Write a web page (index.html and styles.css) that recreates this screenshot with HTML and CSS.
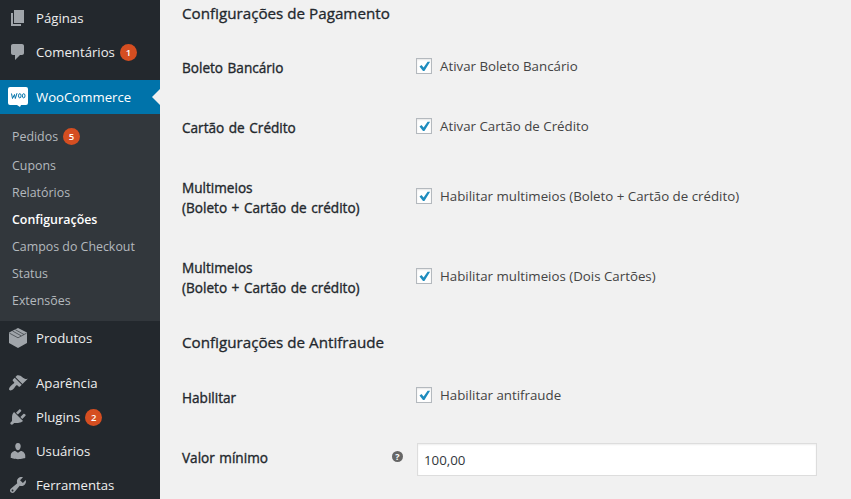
FILE: index.html
```
<!DOCTYPE html>
<html lang="pt-BR">
<head>
<meta charset="utf-8">
<title>WooCommerce</title>
<link rel="stylesheet" href="styles.css">
</head>
<body>
<div class="layout">
  <nav class="menu">
    <a class="item"><svg class="icon" viewBox="0 0 20 20"><path d="M6 15V2h10v13H6zm-1 1h8v2H3V5h2v11z"/></svg><span>Páginas</span></a>
    <a class="item"><svg class="icon" viewBox="0 0 20 20"><path d="M5 2h9c1.1 0 2 .9 2 2v7c0 1.1-.9 2-2 2h-2l-5 5v-5H5c-1.1 0-2-.9-2-2V4c0-1.1.9-2 2-2z"/></svg><span>Comentários</span><b class="badge">1</b></a>
    <a class="item current gap"><svg class="icon" viewBox="0 0 20 20"><path class="bubble" d="M2 0h16q2 0 2 2v14q0 2-2 2h-5l-1 2-3-2H2q-2 0-2-2V2q0-2 2-2z"/><path class="letters" d="M3.5 6.5l1 5 2-4 .8 4L9 6.2"/><ellipse class="letters" cx="11.8" cy="8.8" rx="1.3" ry="2.1"/><ellipse class="letters" cx="15.7" cy="8.8" rx="1.3" ry="2.1"/></svg><span>WooCommerce</span></a>
    <div class="submenu">
      <a class="sub first"><span>Pedidos</span><b class="badge">5</b></a>
      <a class="sub">Cupons</a>
      <a class="sub">Relatórios</a>
      <a class="sub active">Configurações</a>
      <a class="sub">Campos do Checkout</a>
      <a class="sub">Status</a>
      <a class="sub">Extensões</a>
    </div>
    <a class="item"><svg class="icon" viewBox="0 0 20 20"><path d="M10 0l9 4.5V15l-9 5-9-5V4.500z"/><path class="crease" d="M1.500 5.200l8.500 4.600 8.500-4.600M4.500 3l8.700 4.800M7.300 1.700l8.700 4.800"/></svg><span>Produtos</span></a>
    <a class="item gap"><svg class="icon" viewBox="0 0 20 20"><path d="M14.48 11.06L7.41 3.99l1.5-1.5c.5-.56 2.3-.47 3.51.32 1.21.8 1.43 1.28 2.91 2.1 1.18.64 2.45 1.26 4.45.85zm-.71.71L6.7 4.7 4.93 6.47c-.39.39-.39 1.02 0 1.41l1.06 1.06c.39.39.39 1.03 0 1.42-.6.6-1.43 1.11-2.21 1.69-.35.26-.7.53-1.01.84C1.43 14.23.4 16.08 1.4 17.07c.99 1 2.84-.03 4.18-1.36.31-.31.58-.66.85-1.02.57-.78 1.08-1.61 1.69-2.21.39-.39 1.02-.39 1.41 0l1.06 1.06c.39.39 1.02.39 1.41 0z"/></svg><span>Aparência</span></a>
    <a class="item"><svg class="icon" viewBox="0 0 20 20"><path d="M13.11 4.36L9.87 7.6 8 5.73l3.24-3.24c.35-.34 1.05-.2 1.56.32.52.51.66 1.21.31 1.55zm-8 1.77l.91-1.12 9.01 9.01-1.19.84c-.71.71-2.63 1.16-3.82 1.16H6.14L4.9 17.26c-.59.59-1.54.59-2.12 0-.59-.58-.59-1.53 0-2.12l1.24-1.24v-3.88c0-1.13.4-3.19 1.09-3.89zm7.26 3.97l3.24-3.24c.34-.35 1.04-.21 1.55.31.52.51.66 1.21.31 1.55l-3.24 3.25z"/></svg><span>Plugins</span><b class="badge">2</b></a>
    <a class="item"><svg class="icon" viewBox="0 0 20 20"><path d="M10 9.25c-2.27 0-2.73-3.44-2.73-3.44C7 4.02 7.82 2 9.97 2c2.16 0 2.98 2.02 2.71 3.81 0 0-.41 3.44-2.68 3.44zm0 2.57L12.72 10c2.39 0 4.52 2.33 4.52 4.53v2.49s-3.65 1.13-7.24 1.13c-3.65 0-7.24-1.13-7.24-1.13v-2.49c0-2.25 1.94-4.48 4.47-4.48z"/></svg><span>Usuários</span></a>
    <a class="item"><svg class="icon" viewBox="0 0 20 20"><path d="M16.68 9.77c-1.34 1.34-3.3 1.67-4.95.99l-5.41 6.52c-.99.99-2.59.99-3.58 0s-.99-2.59 0-3.57l6.52-5.42c-.68-1.65-.35-3.61.99-4.95 1.28-1.28 3.12-1.62 4.72-1.06l-2.89 2.89 2.82 2.82 2.86-2.87c.53 1.58.18 3.39-1.08 4.65zM3.81 16.21c.4.39 1.04.39 1.43 0 .4-.4.4-1.04 0-1.43-.39-.4-1.03-.4-1.43 0-.39.39-.39 1.03 0 1.43z"/></svg><span>Ferramentas</span></a>
  </nav>
  <main class="content">
    <h2>Configurações de Pagamento</h2>
    <div class="row"><div class="label">Boleto Bancário</div><label class="check"><span class="box"><svg viewBox="0 0 14 14"><path d="M2.500 7.600l2-1.500 2.100 2.400L10.600 2.700h2.500L7.400 12H6z"/></svg></span>Ativar Boleto Bancário</label></div>
    <div class="row"><div class="label">Cartão de Crédito</div><label class="check"><span class="box"><svg viewBox="0 0 14 14"><path d="M2.500 7.600l2-1.500 2.100 2.400L10.600 2.700h2.500L7.400 12H6z"/></svg></span>Ativar Cartão de Crédito</label></div>
    <div class="row"><div class="label">Multimeios<br>(Boleto + Cartão de crédito)</div><label class="check middle"><span class="box"><svg viewBox="0 0 14 14"><path d="M2.500 7.600l2-1.500 2.100 2.400L10.600 2.700h2.500L7.400 12H6z"/></svg></span>Habilitar multimeios (Boleto + Cartão de crédito)</label></div>
    <div class="row"><div class="label">Multimeios<br>(Boleto + Cartão de crédito)</div><label class="check middle"><span class="box"><svg viewBox="0 0 14 14"><path d="M2.500 7.600l2-1.500 2.100 2.400L10.600 2.700h2.500L7.400 12H6z"/></svg></span>Habilitar multimeios (Dois Cartões)</label></div>
    <h2 class="second">Configurações de Antifraude</h2>
    <div class="row"><div class="label">Habilitar</div><label class="check raised"><span class="box"><svg viewBox="0 0 14 14"><path d="M2.500 7.600l2-1.500 2.100 2.400L10.600 2.700h2.500L7.400 12H6z"/></svg></span>Habilitar antifraude</label></div>
    <div class="row"><div class="label with-help">Valor mínimo<span class="help">?</span></div><input class="field" type="text" value="100,00"></div>
  </main>
</div>
</body>
</html>
```
FILE: styles.css
```
* { box-sizing: border-box; }
body {
  margin: 0;
  background: #f1f1f1;
  color: #444;
  font-family: "Open Sans", "Noto Sans", sans-serif;
  font-size: 13.3px;
}
.layout { display: flex; height: 499px; overflow: hidden; }

.menu { width: 160px; flex: none; padding-top: 1px; background: #23282d; }
.item {
  position: relative;
  display: flex;
  align-items: center;
  height: 34px;
  padding-left: 8px;
  color: #eee;
  font-size: 13.2px;
}
.item.gap { margin-top: 11px; }
.icon { width: 20px; height: 20px; margin-right: 8px; flex: none; fill: #a0a5aa; overflow: visible; }
.crease { fill: none; stroke: #23282d; stroke-width: .6; }
.bubble { fill: #fff; }
.letters { fill: none; stroke: #0073aa; stroke-width: 1; }
.current { background: #0073aa; color: #fff; }
.current::after {
  content: "";
  position: absolute;
  right: 0;
  top: 9px;
  border: 8px solid transparent;
  border-left-width: 0;
  border-right-color: #f1f1f1;
}
.badge {
  display: flex;
  align-items: center;
  justify-content: center;
  width: 17px;
  height: 17px;
  margin-left: 5px;
  border-radius: 50%;
  background: #d54e21;
  color: #fff;
  font-size: 9.5px;
  font-weight: 600;
}
.submenu { padding: 7px 0; background: #32373c; }
.sub {
  display: flex;
  align-items: center;
  height: 27px;
  padding-left: 12px;
  color: #b4b9be;
  font-size: 12.4px;
}
.sub.first { height: 31px; padding-bottom: 1px; }
.sub.active { color: #fff; font-weight: 600; }

.content { flex: 1; padding-left: 22px; }
h2 {
  height: 38px;
  margin: 0;
  padding-top: 3px;
  color: #23282d;
  font-size: 15.2px;
  font-weight: 400;
  line-height: 20px;
  -webkit-text-stroke: .3px #23282d;
}
h2.second { height: 50px; padding-top: 14px; }
.row { display: flex; align-items: flex-start; }
.label {
  width: 234px;
  padding: 20px 0;
  color: #23282d;
  font-size: 13.6px;
  line-height: 20px;
  word-spacing: 1px;
  -webkit-text-stroke: .35px #23282d;
}
.with-help { display: flex; }
.help {
  width: 11px;
  height: 11px;
  margin: 3px 13px 0 auto;
  border-radius: 50%;
  background: #666;
  color: #fff;
  font-size: 9px;
  font-weight: 700;
  line-height: 11px;
  text-align: center;
  -webkit-text-stroke: 0;
}
.check { display: flex; align-items: center; height: 20px; margin-top: 18px; white-space: nowrap; }
.check.middle { margin-top: 28px; }
.check.raised { margin-top: 17px; }
.box {
  width: 16px;
  height: 16px;
  margin-right: 8px;
  border: 1px solid #b4b9be;
  background: #fff;
  box-shadow: inset 0 1px 2px rgba(0, 0, 0, .1);
}
.box svg { display: block; width: 14px; height: 14px; fill: #1e8cbe; }
.field {
  width: 400px;
  height: 33px;
  margin: 15px 0 0 1px;
  padding: 0 7px 0 6px;
  border: 1px solid #ddd;
  border-radius: 0;
  background: #fff;
  box-shadow: inset 0 1px 2px rgba(0, 0, 0, .07);
  color: #32373c;
  font: inherit;
}
```
